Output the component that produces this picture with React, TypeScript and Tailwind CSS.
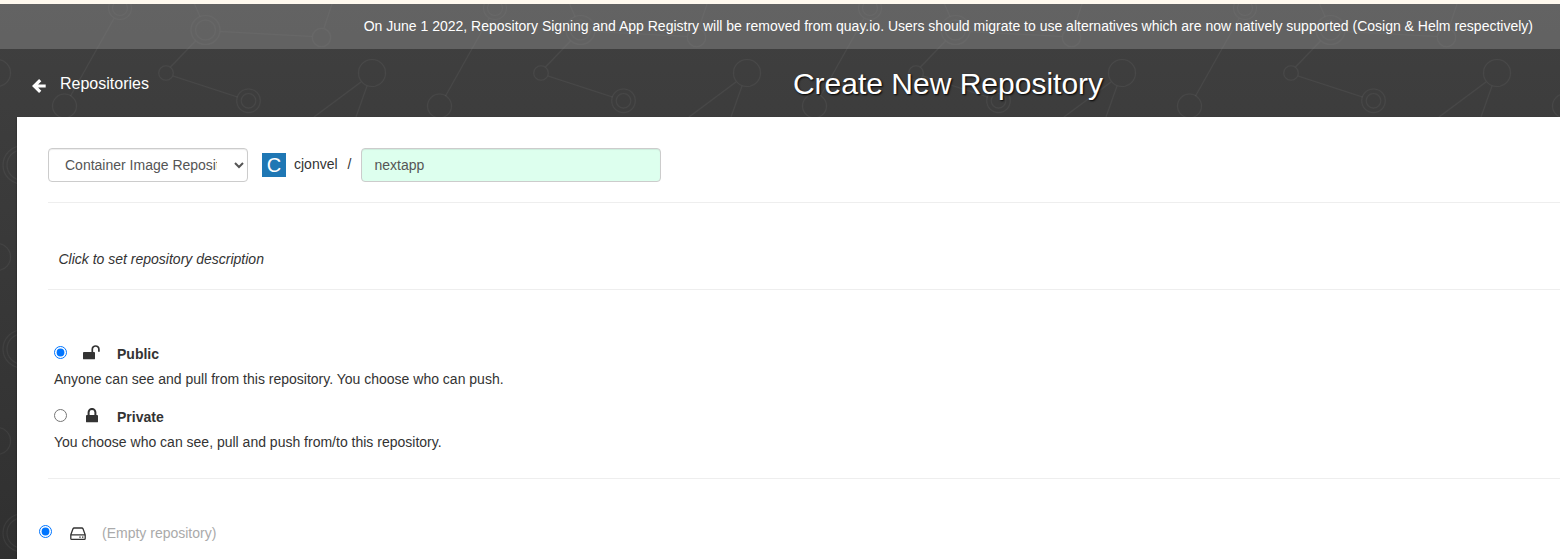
import React from "react";

function Network() {
  return (
    <svg className="absolute inset-0 h-full w-full" aria-hidden="true">
      <defs>
        <pattern id="net" width="375" height="184" patternUnits="userSpaceOnUse">
          <g fill="none" stroke="#ffffff" strokeOpacity="0.05" strokeWidth="1.1">
            <circle cx="120" cy="8" r="11.5" />
            <circle cx="120" cy="8" r="7.5" />
            <circle cx="205.5" cy="30" r="14.5" />
            <circle cx="205.5" cy="30" r="10" />
            <circle cx="321.5" cy="37.5" r="9.2" />
            <circle cx="166" cy="73" r="7.3" />
            <circle cx="248.5" cy="100.8" r="11.8" />
            <circle cx="248.5" cy="100.8" r="7.3" />
            <circle cx="372" cy="73" r="13.5" />
            <circle cx="-3" cy="73" r="13.5" />
            <circle cx="64.5" cy="106" r="12" />
            <circle cx="22" cy="165" r="19" />
            <circle cx="22" cy="165" r="15" />
            <path d="M114 18.500L70.500 96M195.500 41L170.500 67M220.500 31.500L312 36.500M194.500 4L200 16.500M332 4L324 28M173 76L237.500 97M361 82L314 117M367 86L356 117" />
          </g>
        </pattern>
      </defs>
      <rect width="100%" height="100%" fill="url(#net)" />
    </svg>
  );
}

function Lock({ open = false }: { open?: boolean }) {
  return (
    <svg className="h-[15px] w-[17px]" viewBox="0 0 17 15">
      <rect x={open ? 0 : 3} y="7" width="12" height="7.300" rx="0.900" fill="#333" />
      <path
        d={open ? "M9.300 7V4.300a3.300 3.300 0 0 1 6.600 0V6.700" : "M5.600 7.500V4.300a3.400 3.400 0 0 1 6.800 0V7.500"}
        fill="none"
        stroke="#333"
        strokeWidth={open ? 1.7 : 2}
      />
    </svg>
  );
}

export default function App() {
  return (
    <div className="relative flex h-[559px] w-full flex-col overflow-hidden bg-linear-to-b from-[#404040] to-[#303030] font-['Liberation_Sans',Arial,sans-serif] text-[14px] leading-5 text-[#333]">
      <Network />
      <div className="relative h-1 shrink-0 bg-[#fff9ee]" />
      <div className="relative flex h-[45px] shrink-0 items-center justify-end bg-[#858585]/50 pr-[27px] pb-[2px] text-white">
        <span className="whitespace-nowrap">
          On June 1 2022, Repository Signing and App Registry will be removed from quay.io. Users should migrate to use alternatives which are now natively supported (Cosign &amp; Helm respectively)
        </span>
      </div>
      <header className="relative grid h-[68px] shrink-0 grid-cols-[337px_1222px] items-center pt-[2px] text-white">
        <a className="flex items-center pl-8 text-[16px]">
          <svg className="mt-1 h-[14px] w-[14px]" viewBox="0 0 14 14">
            <path d="M8.200 1.200L2.300 7l5.900 5.800M3 7h10.700" fill="none" stroke="white" strokeWidth="3.200" />
          </svg>
          <span className="ml-[14px]">Repositories</span>
        </a>
        <h1 className="text-center text-[30px] leading-9 [text-shadow:1px_1px_2px_#000]">Create New Repository</h1>
      </header>
      <main className="relative ml-[17px] flex grow flex-col bg-white pl-[31px] shadow-[0_1px_2px_rgba(0,0,0,0.4)]">
        <div className="flex h-[86px] shrink-0 items-center border-b border-[#eee] pt-[10px]">
          <select className="h-[34px] w-[200px] rounded border border-[#ccc] bg-white py-[6px] pr-[14px] pl-3 text-[14px] text-[#555] shadow-[inset_0_1px_1px_rgba(0,0,0,0.075)]">
            <option>Container Image Repository</option>
          </select>
          <span className="ml-[14px] flex h-6 w-6 items-center justify-center bg-[#1f77b4] text-[20px] text-white">C</span>
          <span className="-mt-[2px] ml-2">cjonvel</span>
          <span className="-mt-[2px] ml-[10px]">/</span>
          <input
            defaultValue="nextapp"
            className="ml-[10px] h-[34px] w-[300px] rounded border border-[#ccc] bg-[#ddffee] px-3 py-[6px] text-[14px] text-[#555] shadow-[inset_0_1px_1px_rgba(0,0,0,0.075)]"
          />
        </div>
        <div className="h-[87px] shrink-0 border-b border-[#eee] pt-[46px] pl-[10.500px] italic">Click to set repository description</div>
        <div className="h-[189px] shrink-0 border-b border-[#eee] pt-[54px] pl-[6px]">
          <label className="flex h-5 items-center">
            <input type="radio" name="visibility" defaultChecked className="-mt-[3px] h-[13px] w-[13px]" />
            <span className="-mt-[4px] flex w-[50px] pl-4"><Lock open /></span>
            <b>Public</b>
          </label>
          <p className="mt-[5px]">Anyone can see and pull from this repository. You choose who can push.</p>
          <label className="mt-[18px] flex h-5 items-center">
            <input type="radio" name="visibility" className="-mt-[3px] h-[13px] w-[13px]" />
            <span className="-mt-[4px] flex w-[50px] pl-4"><Lock /></span>
            <b>Private</b>
          </label>
          <p className="mt-[5px]">You choose who can see, pull and push from/to this repository.</p>
        </div>
        <label className="-ml-[9px] flex h-[109px] items-center text-[#aaa]">
          <input type="radio" name="source" defaultChecked className="-mt-[4px] h-[13px] w-[13px]" />
          <svg className="ml-[18px] h-4 w-4" viewBox="0 0 16 16" fill="none" stroke="#333" strokeWidth="1.300">
            <path d="M.8 8.800L3 2.800Q3.300 2 4.200 2h7.600q.9 0 1.200.8l2.200 6v3.700q0 .9-.9.900H1.700q-.9 0-.9-.9zM.8 8.800h14.400" />
            <path d="M9.300 11.200h1.400M12 11.200h1.400" />
          </svg>
          <span className="-mt-[2px] ml-4">(Empty repository)</span>
        </label>
      </main>
    </div>
  );
}
